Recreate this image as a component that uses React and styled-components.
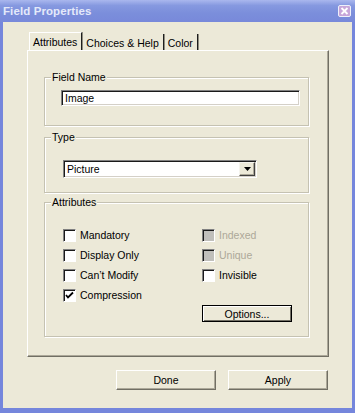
import React from 'react';
import styled, { createGlobalStyle } from 'styled-components';

const GlobalStyle = createGlobalStyle`
  html, body {
    margin: 0;
    padding: 0;
    background: #7586dc;
  }
  * { box-sizing: border-box; }
`;

const Window = styled.div`
  width: 355px;
  height: 413px;
  display: flex;
  flex-direction: column;
  font-family: "Liberation Sans", Arial, sans-serif;
  font-size: 10.5px;
  color: #000;
`;

const TitleBar = styled.div`
  height: 22px;
  display: flex;
  align-items: center;
  justify-content: space-between;
  padding: 0 4px 0 3px;
  background: linear-gradient(180deg, #aab7ee 0%, #8699e0 25%, #7b8edb 60%, #7889da 100%);
`;

const Title = styled.span`
  font-weight: bold;
  font-size: 11.5px;
  color: #e4e9fa;
  letter-spacing: 0.1px;
`;

const CloseBox = styled.div`
  width: 13px;
  height: 12px;
  border: 1px solid #eef0fb;
  border-radius: 2px;
  background: #c7a6d9;
  display: flex;
  align-items: center;
  justify-content: center;
`;

const Frame = styled.div`
  flex: 1;
  background: #ece9d8;
  border-left: 3px solid #7586dc;
  border-right: 3px solid #7586dc;
  border-bottom: 5px solid #7586dc;
  padding: 10px 0 0 24px;
  display: flex;
  flex-direction: column;
`;

const TabStrip = styled.div`
  display: flex;
  align-items: flex-end;
  height: 18px;
  padding-left: 2px;
`;

const Tab = styled.div`
  height: ${(p) => (p.$active ? '18px' : '16px')};
  padding: 0 4px 0 3px;
  display: flex;
  align-items: center;
  padding-top: ${(p) => (p.$active ? '0' : '2px')};
  border-right: 1px solid #1e1e1e;
  box-shadow: 1px 0 0 #8f8d80;
  margin-right: 1px;
  border-left: ${(p) => (p.$active ? '1px solid #fff' : 'none')};
  border-top: ${(p) => (p.$active ? '1px solid #fff' : 'none')};
  white-space: nowrap;
`;

const Panel = styled.div`
  width: 302px;
  height: 307px;
  border-top: 1px solid #fff;
  border-left: 1px solid #fff;
  border-right: 1px solid #716f64;
  border-bottom: 1px solid #716f64;
  box-shadow: inset -1px -1px 0 #aca899;
  padding: 0 19px 0 16px;
  display: flex;
  flex-direction: column;
`;

const Group = styled.div`
  position: relative;
  height: ${(p) => p.$h}px;
  margin-top: ${(p) => p.$mt}px;
  border: 1px solid #c5c2b2;
  box-shadow: inset 1px 1px 0 #fff, 1px 1px 0 #fff;
  padding: ${(p) => p.$pad};
`;

const Caption = styled.span`
  position: absolute;
  top: -7px;
  left: 6px;
  padding: 0 1px;
  background: #ece9d8;
  line-height: 13px;
`;

const sunken = `
  border-top: 1px solid #808080;
  border-left: 1px solid #808080;
  border-right: 1px solid #fff;
  border-bottom: 1px solid #fff;
  box-shadow: inset 1px 1px 0 #1a1a1a, inset -1px -1px 0 #d4d0c8;
  background: #fff;
`;

const raised = `
  border-top: 1px solid #fff;
  border-left: 1px solid #fff;
  border-right: 1px solid #716f64;
  border-bottom: 1px solid #716f64;
  box-shadow: inset -1px -1px 0 #aca899;
  background: #ece9d8;
`;

const TextBox = styled.div`
  width: 239px;
  height: 16px;
  ${sunken}
  padding: 0 3px;
  display: flex;
  align-items: center;
`;

const Select = styled.div`
  width: 194px;
  height: 18px;
  ${sunken}
  padding: 0 1px 0 3px;
  display: flex;
  align-items: center;
  justify-content: space-between;
`;

const DropButton = styled.div`
  width: 16px;
  height: 14px;
  ${raised}
  border-top-color: #f5f4ee;
  border-left-color: #f5f4ee;
  border-right-color: #404040;
  border-bottom-color: #404040;
  display: flex;
  align-items: center;
  justify-content: center;
`;

const CheckGrid = styled.div`
  display: grid;
  grid-template-columns: 139px auto;
  grid-auto-rows: 20px;
`;

const CheckRow = styled.label`
  display: flex;
  align-items: center;
  gap: 4px;
  color: ${(p) => (p.$disabled ? '#aca899' : '#000')};
`;

const Box = styled.span`
  width: 13px;
  height: 13px;
  border-top: 1px solid #808080;
  border-left: 1px solid #808080;
  border-right: 1px solid #fff;
  border-bottom: 1px solid #fff;
  box-shadow: inset 1px 1px 0 #1a1a1a;
  background: ${(p) => (p.$disabled ? '#c0bfbb' : '#fff')};
  display: flex;
  align-items: center;
  justify-content: center;
`;

const Button = styled.div`
  width: ${(p) => p.$w}px;
  height: ${(p) => p.$h}px;
  ${raised}
  display: flex;
  align-items: center;
  justify-content: center;
`;

const DefaultButton = styled(Button)`
  outline: 1px solid #000;
  outline-offset: -1px;
  border-right-color: #404040;
  border-bottom-color: #404040;
  box-shadow: inset 1px 1px 0 #fff, inset -1px -1px 0 #716f64;
`;

const ButtonRow = styled.div`
  display: flex;
  gap: 12px;
  margin-top: 13px;
  padding-left: 89px;
`;

const Check = ({ label, checked, disabled }) => (
  <CheckRow $disabled={disabled}>
    <Box $disabled={disabled}>
      {checked && (
        <svg width="9" height="9" viewBox="0 0 9 9">
          <path d="M1 4 L3 6.5 L8 1.5" stroke="#000" strokeWidth="1.8" fill="none" />
        </svg>
      )}
    </Box>
    {label}
  </CheckRow>
);

export default function App() {
  return (
    <>
      <GlobalStyle />
      <Window>
        <TitleBar>
          <Title>Field Properties</Title>
          <CloseBox>
            <svg width="9" height="8" viewBox="0 0 9 8">
              <path d="M1.5 1 L7.5 7 M7.5 1 L1.5 7" stroke="#fff" strokeWidth="1.8" />
            </svg>
          </CloseBox>
        </TitleBar>
        <Frame>
          <TabStrip>
            <Tab $active>Attributes</Tab>
            <Tab>Choices &amp; Help</Tab>
            <Tab>Color</Tab>
          </TabStrip>
          <Panel>
            <Group $h={49} $mt={26} $pad="12px 0 0 16px">
              <Caption>Field Name</Caption>
              <TextBox>Image</TextBox>
            </Group>
            <Group $h={56} $mt={11} $pad="22px 0 0 18px">
              <Caption>Type</Caption>
              <Select>
                Picture
                <DropButton>
                  <svg width="7" height="4" viewBox="0 0 7 4">
                    <path d="M0 0 H7 L3.5 4 Z" fill="#000" />
                  </svg>
                </DropButton>
              </Select>
            </Group>
            <Group $h={135} $mt={9} $pad="22px 0 0 18px">
              <Caption>Attributes</Caption>
              <CheckGrid>
                <Check label="Mandatory" />
                <Check label="Indexed" disabled />
                <Check label="Display Only" />
                <Check label="Unique" disabled />
                <Check label="Can’t Modify" />
                <Check label="Invisible" />
                <Check label="Compression" checked />
                <span />
                <span />
                <DefaultButton $w={90} $h={17}>Options...</DefaultButton>
              </CheckGrid>
            </Group>
          </Panel>
          <ButtonRow>
            <Button $w={100} $h={20}>Done</Button>
            <Button $w={100} $h={20}>Apply</Button>
          </ButtonRow>
        </Frame>
      </Window>
    </>
  );
}
